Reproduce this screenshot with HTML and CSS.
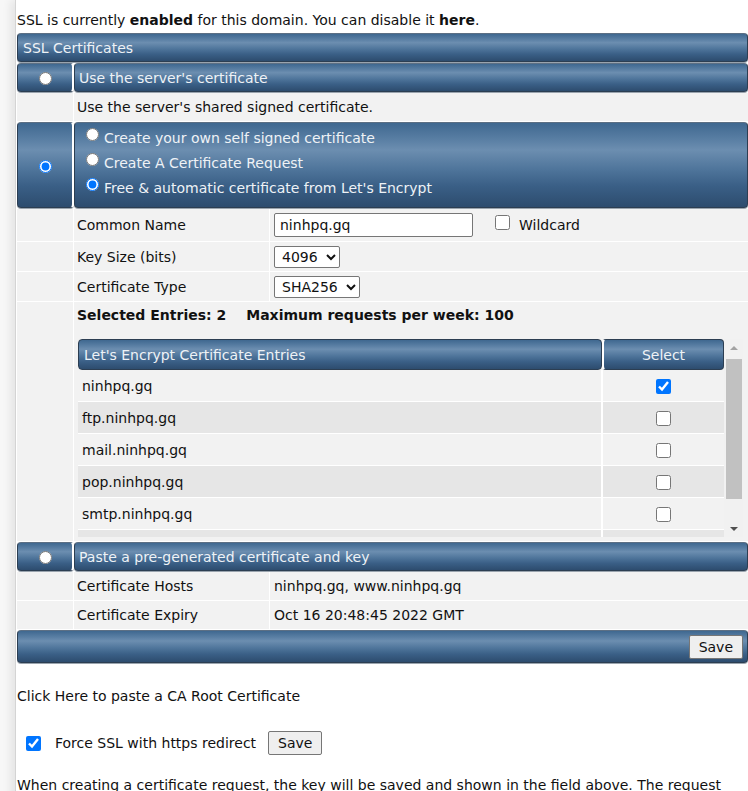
FILE: index.html
```html
<!DOCTYPE html>
<html>
<head>
<meta charset="utf-8">
<link rel="stylesheet" href="styles.css">
</head>
<body>
<div class="page">
  <p class="status">SSL is currently <b>enabled</b> for this domain. You can disable it <b>here</b>.</p>
  <table class="ssl">
    <colgroup><col class="c1"><col class="c2"><col class="c3"></colgroup>
    <tr><td colspan="3" class="bar title">SSL Certificates</td></tr>
    <tr>
      <td class="bar radio-cell"><input type="radio" name="type"></td>
      <td colspan="2" class="bar">Use the server's certificate</td>
    </tr>
    <tr class="plain">
      <td></td>
      <td colspan="2">Use the server's shared signed certificate.</td>
    </tr>
    <tr>
      <td class="bar radio-cell"><input type="radio" name="type" checked></td>
      <td colspan="2" class="bar multi">
        <label class="opt"><input type="radio" name="sub">Create your own self signed certificate</label>
        <label class="opt"><input type="radio" name="sub">Create A Certificate Request</label>
        <label class="opt"><input type="radio" name="sub" checked>Free &amp; automatic certificate from Let's Encrypt</label>
      </td>
    </tr>
    <tr class="plain r-cn">
      <td></td>
      <td>Common Name</td>
      <td><input class="txt" type="text" value="ninhpq.gq"><label class="wild"><input type="checkbox">Wildcard</label></td>
    </tr>
    <tr class="plain r-sel">
      <td></td>
      <td>Key Size (bits)</td>
      <td><select class="sel"><option>4096</option></select></td>
    </tr>
    <tr class="plain r-sel">
      <td></td>
      <td>Certificate Type</td>
      <td><select class="sel"><option>SHA256</option></select></td>
    </tr>
    <tr class="plain">
      <td></td>
      <td colspan="2" class="entries">
        <div class="summary"><b>Selected Entries: 2</b><b>Maximum requests per week: 100</b></div>
        <div class="scroller">
          <div class="viewport">
            <table class="le">
              <tr><th class="le-name">Let's Encrypt Certificate Entries</th><th class="le-sel">Select</th></tr>
              <tr><td>ninhpq.gq</td><td class="ck"><input type="checkbox" checked></td></tr>
              <tr><td>ftp.ninhpq.gq</td><td class="ck"><input type="checkbox"></td></tr>
              <tr><td>mail.ninhpq.gq</td><td class="ck"><input type="checkbox"></td></tr>
              <tr><td>pop.ninhpq.gq</td><td class="ck"><input type="checkbox"></td></tr>
              <tr><td>smtp.ninhpq.gq</td><td class="ck"><input type="checkbox"></td></tr>
              <tr><td></td><td class="ck"></td></tr>
            </table>
          </div>
          <div class="vbar">
            <span class="arrow up"></span>
            <span class="thumb"></span>
            <span class="arrow down"></span>
          </div>
        </div>
      </td>
    </tr>
    <tr>
      <td class="bar radio-cell"><input type="radio" name="type"></td>
      <td colspan="2" class="bar">Paste a pre-generated certificate and key</td>
    </tr>
    <tr class="plain">
      <td></td>
      <td>Certificate Hosts</td>
      <td>ninhpq.gq, www.ninhpq.gq</td>
    </tr>
    <tr class="plain">
      <td></td>
      <td>Certificate Expiry</td>
      <td>Oct 16 20:48:45 2022 GMT</td>
    </tr>
    <tr>
      <td colspan="3" class="bar savebar"><button class="btn">Save</button></td>
    </tr>
  </table>
  <p class="ca">Click Here to paste a CA Root Certificate</p>
  <div class="force"><input type="checkbox" checked><span>Force SSL with https redirect</span><button class="btn">Save</button></div>
  <p class="note">When creating a certificate request, the key will be saved and shown in the field above. The request will be shown so you can send it to your certificate authority.</p>
</div>
</body>
</html>
```
FILE: styles.css
```css
html, body {
  margin: 0;
  padding: 0;
  background: #f7f7f7;
}
body {
  font-family: "DejaVu Sans", Verdana, sans-serif;
  font-size: 14px;
  color: #111;
  overflow: hidden;
  height: 791px;
}
.page {
  margin-left: 15px;
  width: 731px;
  background: #fff;
  border-left: 1px solid #d4d4d4;
  box-shadow: -5px 0 8px rgba(0,0,0,0.07);
  min-height: 791px;
  padding-left: 1px;
}
.status {
  margin: 0;
  padding-top: 12px;
  height: 20px;
  line-height: 17px;
}
.ssl {
  width: 731px;
  border-collapse: separate;
  border-spacing: 0 1px;
  table-layout: fixed;
}
.c1 { width: 57px; }
.c2 { width: 196px; }
.ssl td {
  padding: 0;
}
.bar {
  background: linear-gradient(to bottom, #3f6890 0%, #5a7fa4 20%, #6c8eb0 32%, #4f759b 55%, #3a5f86 75%, #2d4c6e 100%);
  color: #eef2f6;
  border: 1px solid #2c3e52;
  border-top-color: #5c6f84;
  border-radius: 4px;
  height: 27px;
  padding: 0 4px !important;
  box-shadow: 0 1px 0 #9aa4ae;
}
.bar.title {
  padding-left: 5px !important;
}
.radio-cell {
  text-align: center;
  border-right: 2px solid #fff;
  padding: 0 !important;
}
.radio-cell input { margin: 0; width: 13px; height: 13px; vertical-align: middle; }
.multi {
  height: 80px;
  padding: 0 10px 4px 11px !important;
}
.opt {
  display: flex;
  align-items: center;
  height: 25px;
}
.opt input {
  margin: 0 5px 0 0;
  width: 13px;
  height: 13px;
  position: relative;
  top: -4px;
}
.plain td {
  background: #f2f2f2;
  height: 28px;
  border-right: 1px solid #fff;
}
.plain td:last-child { border-right: 0; }
.plain td:nth-child(2) { padding-left: 3px; }
.plain td:nth-child(3) { padding-left: 4px; }
.plain td[colspan] { padding-left: 3px; }
.r-cn td { height: 32px; }
.r-sel td { height: 29px; }
.txt {
  width: 199px;
  height: 24px;
  box-sizing: border-box;
  border: 1px solid #767676;
  border-radius: 2px;
  padding: 1px 5px;
  font-family: inherit;
  font-size: 14px;
  vertical-align: middle;
  margin: 0;
  color: #111;
}
.wild { margin-left: 22px; vertical-align: middle; }
.wild input { width: 15px; height: 15px; margin: 0 9px 0 0; position: relative; top: -3px; vertical-align: middle; }
.sel {
  font-family: inherit;
  font-size: 14px;
  height: 22px;
  border: 1px solid #767676;
  border-radius: 2px;
  background: #fff;
  padding: 0 5px 0 3px;
  margin: 0;
  color: #111;
}
.entries {
  vertical-align: top;
  padding-top: 5px !important;
  padding-bottom: 4px !important;
}
.summary {
  height: 32px;
}
.summary b + b { margin-left: 20px; }
.scroller {
  display: flex;
  width: 665px;
  height: 198px;
  margin-left: 1px;
}
.viewport {
  flex: 1;
  overflow: hidden;
}
.vbar {
  width: 19px;
  background: #f1f1f1;
  display: flex;
  flex-direction: column;
  align-items: center;
}
.arrow {
  height: 17px;
  width: 16px;
  display: flex;
  align-items: center;
  justify-content: center;
}
.arrow::before {
  content: "";
  border-left: 4px solid transparent;
  border-right: 4px solid transparent;
}
.arrow.up::before { border-bottom: 4px solid #a3a3a3; }
.arrow.down::before { border-top: 4px solid #505050; }
.thumb {
  width: 16px;
  height: 140px;
  margin: 3px 0 auto;
  background: #c1c1c1;
}
.le {
  width: 646px;
  border-collapse: separate;
  border-spacing: 0;
  table-layout: fixed;
}
.le th {
  background: linear-gradient(to bottom, #3f6890 0%, #5a7fa4 20%, #6c8eb0 32%, #4f759b 55%, #3a5f86 75%, #2d4c6e 100%);
  color: #eef2f6;
  font-weight: normal;
  border: 1px solid #2c3e52;
  border-radius: 4px;
  height: 29px;
  padding: 0 5px;
  text-align: left;
}
.le th.le-sel { width: 109px; text-align: center; border-left: 2px solid #fff; }
.le td {
  height: 31px;
  padding: 0 4px;
  border-bottom: 1px solid #fff;
  background: #f2f2f2;
}
.le tr:nth-child(odd) td { background: #e6e6e6; }
.le td.ck { text-align: center; border-left: 1px solid #fff; }
.le td.ck input { width: 15px; height: 15px; margin: 0; vertical-align: middle; }
.savebar {
  text-align: right;
  height: 31px;
  padding-right: 4px !important;
}
.btn {
  font-family: inherit;
  font-size: 14px;
  background: #efefef;
  border: 1px solid #767676;
  border-radius: 2px;
  padding: 1px 9px;
  color: #111;
  height: 24px;
}
.ca {
  margin: 24px 0 0;
  line-height: 17px;
}
.force {
  margin-top: 26px;
  display: flex;
  align-items: center;
  padding-left: 9px;
}
.force input { width: 15px; height: 15px; margin: 0 14px 0 0; }
.force .btn { margin-left: 12px; }
.note {
  margin: 22px 0 0;
  line-height: 17px;
}
```
